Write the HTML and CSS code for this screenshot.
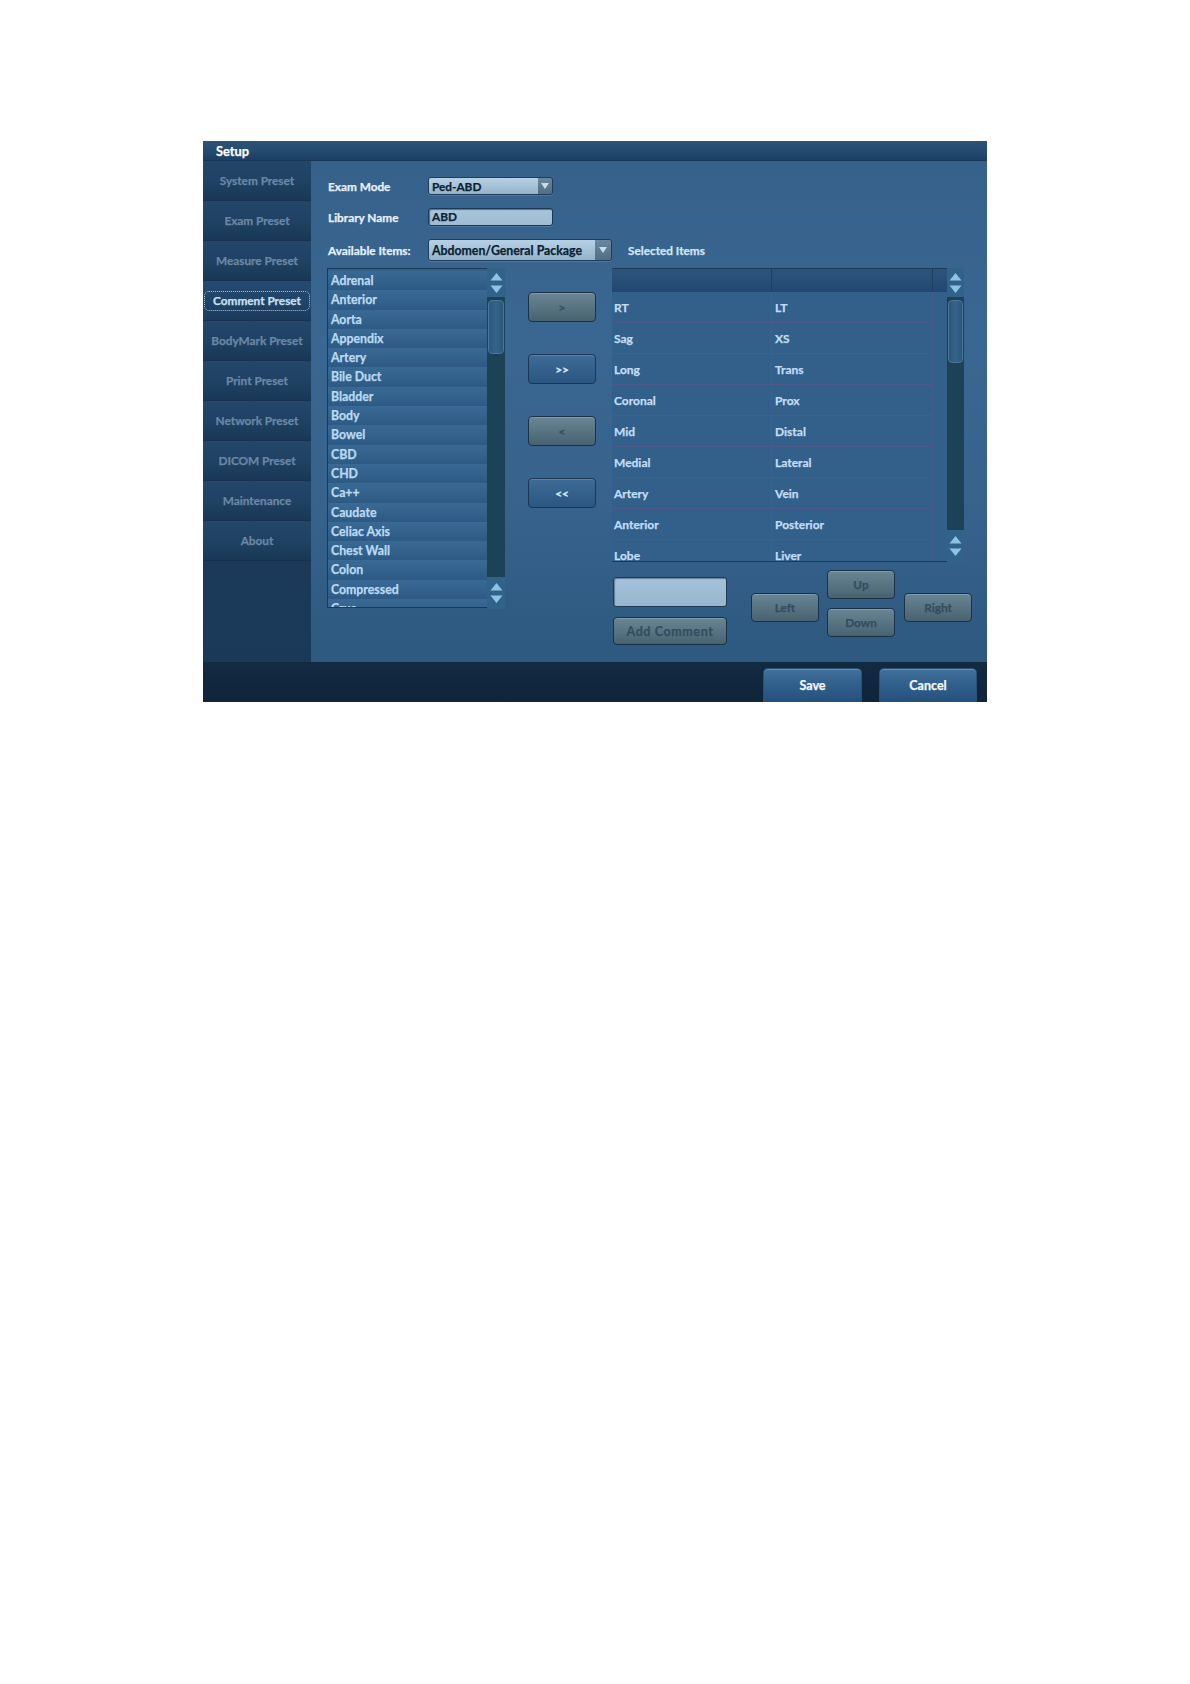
FILE: index.html
```html
<!DOCTYPE html>
<html>
<head>
<meta charset="utf-8">
<title>Setup</title>
<link rel="stylesheet" href="styles.css">
</head>
<body>
<div class="window">
  <div class="titlebar">Setup</div>
  <div class="body">
    <nav class="sidebar">
      <div class="nav-item">System Preset</div>
      <div class="nav-item">Exam Preset</div>
      <div class="nav-item">Measure Preset</div>
      <div class="nav-item active"><span class="focus">Comment Preset</span></div>
      <div class="nav-item">BodyMark Preset</div>
      <div class="nav-item">Print Preset</div>
      <div class="nav-item">Network Preset</div>
      <div class="nav-item">DICOM Preset</div>
      <div class="nav-item">Maintenance</div>
      <div class="nav-item">About</div>
    </nav>
    <main class="content">
      <div class="form-row r1">
        <label class="label">Exam Mode</label>
        <div class="select sel-small"><span class="sel-text">Ped-ABD</span><span class="sel-arrow"><svg width="8" height="6" viewBox="0 0 8 6"><path d="M0 0H8L4 6Z" fill="#c9dcea"/></svg></span></div>
      </div>
      <div class="form-row r2">
        <label class="label">Library Name</label>
        <div class="textbox">ABD</div>
      </div>
      <div class="form-row r3">
        <label class="label">Available Items:</label>
        <div class="select sel-wide"><span class="sel-text">Abdomen/General Package</span><span class="sel-arrow"><svg width="8" height="6" viewBox="0 0 8 6"><path d="M0 0H8L4 6Z" fill="#c9dcea"/></svg></span></div>
        <span class="label sel-label">Selected Items</span>
      </div>

      <div class="lists">
        <div class="left-list">
          <ul class="items">
            <li>Adrenal</li><li>Anterior</li><li>Aorta</li><li>Appendix</li><li>Artery</li><li>Bile Duct</li><li>Bladder</li><li>Body</li><li>Bowel</li><li>CBD</li><li>CHD</li><li>Ca++</li><li>Caudate</li><li>Celiac Axis</li><li>Chest Wall</li><li>Colon</li><li>Compressed</li><li>Crus</li>
          </ul>
          <div class="scrollbar">
            <div class="arrows"><svg width="13" height="22" viewBox="0 0 13 22"><path d="M6.5 1L12.5 8.5H0.5Z" fill="#8fc3e6"/><path d="M0.5 13.5H12.5L6.5 21Z" fill="#8fc3e6"/></svg></div>
            <div class="track"><div class="thumb"></div></div>
            <div class="arrows"><svg width="13" height="22" viewBox="0 0 13 22"><path d="M6.5 1L12.5 8.5H0.5Z" fill="#8fc3e6"/><path d="M0.5 13.5H12.5L6.5 21Z" fill="#8fc3e6"/></svg></div>
          </div>
        </div>

        <div class="move-buttons">
          <button class="btn gray">&gt;</button>
          <button class="btn blue">&gt;&gt;</button>
          <button class="btn gray">&lt;</button>
          <button class="btn blue">&lt;&lt;</button>
        </div>

        <div class="right-side">
          <div class="table-wrap">
            <div class="table">
              <div class="thead"><span class="th c1"></span><span class="th c2"></span><span class="th c3"></span></div>
              <div class="tbody">
                <div class="tr"><span class="td c1">RT</span><span class="td c2">LT</span></div>
                <div class="tr"><span class="td c1">Sag</span><span class="td c2">XS</span></div>
                <div class="tr"><span class="td c1">Long</span><span class="td c2">Trans</span></div>
                <div class="tr"><span class="td c1">Coronal</span><span class="td c2">Prox</span></div>
                <div class="tr"><span class="td c1">Mid</span><span class="td c2">Distal</span></div>
                <div class="tr"><span class="td c1">Medial</span><span class="td c2">Lateral</span></div>
                <div class="tr"><span class="td c1">Artery</span><span class="td c2">Vein</span></div>
                <div class="tr"><span class="td c1">Anterior</span><span class="td c2">Posterior</span></div>
                <div class="tr"><span class="td c1">Lobe</span><span class="td c2">Liver</span></div>
              </div>
            </div>
            <div class="scrollbar sb-right">
              <div class="arrows"><svg width="13" height="22" viewBox="0 0 13 22"><path d="M6.5 1L12.5 8.5H0.5Z" fill="#8fc3e6"/><path d="M0.5 13.5H12.5L6.5 21Z" fill="#8fc3e6"/></svg></div>
              <div class="track"><div class="thumb"></div></div>
              <div class="arrows"><svg width="13" height="22" viewBox="0 0 13 22"><path d="M6.5 1L12.5 8.5H0.5Z" fill="#8fc3e6"/><path d="M0.5 13.5H12.5L6.5 21Z" fill="#8fc3e6"/></svg></div>
            </div>
          </div>

          <div class="controls">
            <div class="comment-col">
              <div class="comment-input"></div>
              <button class="btn gray add">Add Comment</button>
            </div>
            <button class="btn gray dir left">Left</button>
            <div class="updown">
              <button class="btn gray dir">Up</button>
              <button class="btn gray dir">Down</button>
            </div>
            <button class="btn gray dir right">Right</button>
          </div>
        </div>
      </div>
    </main>
  </div>
  <div class="footer">
    <button class="fbtn save">Save</button>
    <button class="fbtn cancel">Cancel</button>
  </div>
</div>
</body>
</html>
```

FILE: styles.css
```css
* { box-sizing: border-box; }
html, body { margin: 0; padding: 0; background: #ffffff; }
body {
  font-family: "Lato", "Open Sans", "DejaVu Sans", sans-serif;
  font-weight: 700;
  height: 1684px;
  -webkit-text-stroke: 0.25px currentColor;
}

.window {
  margin: 141px 0 0 203px;
  width: 784px;
  height: 561px;
  display: flex;
  flex-direction: column;
  background: #2d5680;
}

.titlebar {
  height: 20px;
  padding-left: 13px;
  font-size: 12.8px;
  line-height: 20px;
  color: #ffffff;
  background: linear-gradient(to bottom, #2c5379 0%, #24496e 60%, #1c3f62 100%);
  border-bottom: 1px solid #183656;
}

.body {
  display: flex;
  height: 501px;
}

.sidebar {
  width: 108px;
  flex-shrink: 0;
  display: flex;
  flex-direction: column;
  background: linear-gradient(to bottom, #1d3f60 0%, #1c3c5c 60%, #1a3858 100%);
}

.nav-item {
  height: 40px;
  flex-shrink: 0;
  display: flex;
  align-items: center;
  justify-content: center;
  font-size: 11.8px;
  color: #6b87a5;
  background: linear-gradient(to bottom, #244769 0%, #204365 45%, #193856 100%);
  border-bottom: 1px solid #163250;
}
.nav-item.active {
  color: #c9e0f3;
  background: linear-gradient(to bottom, #254a71 0%, #21456a 45%, #1b3b5c 100%);
}
.focus {
  display: block;
  width: 106px;
  height: 20px;
  line-height: 18px;
  text-align: center;
  border: 1px dotted #a9c6de;
  border-radius: 5px;
}

.content {
  flex: 1;
  padding: 16px 0 0 16px;
  display: flex;
  flex-direction: column;
  background: linear-gradient(to bottom, #35618b 0%, #3a6791 35%, #36628c 70%, #2d587f 100%);
}

.form-row {
  display: flex;
  align-items: center;
}
.r2 { margin-top: 13px; }
.r3 { margin-top: 13px; }

.label {
  width: 101px;
  flex-shrink: 0;
  padding-left: 1px;
  font-size: 11.8px;
  color: #e8f2fb;
}
.sel-label {
  width: auto;
  margin-left: 16px;
  padding-left: 0;
  color: #d4e6f5;
}

.select {
  display: flex;
  height: 18px;
  border: 1px solid #1f3d5a;
  border-radius: 3px;
  overflow: hidden;
  box-shadow: 0 1px 0 rgba(140,180,215,0.25);
}
.sel-small { width: 125px; }
.sel-wide { width: 184px; height: 22px; }
.sel-text {
  flex: 1;
  padding-left: 3px;
  font-size: 11.8px;
  color: #0c1f33;
  display: flex;
  align-items: center;
  background: linear-gradient(to bottom, #b7d0e3 0%, #a4c1d8 55%, #93b1c9 100%);
}
.sel-wide .sel-text { font-size: 12.3px; }
.sel-arrow {
  width: 14px;
  display: flex;
  align-items: center;
  justify-content: center;
  background: linear-gradient(to bottom, #6b879c 0%, #526e84 100%);
}
.sel-wide .sel-arrow { width: 16px; }

.textbox {
  width: 125px;
  height: 18px;
  padding-left: 3px;
  font-size: 11.8px;
  line-height: 16px;
  color: #0c1f33;
  background: linear-gradient(to bottom, #a9c5db 0%, #9ebbd3 100%);
  border: 1px solid #1b3956;
  border-radius: 3px;
  box-shadow: inset 1px 1px 1px rgba(10,30,50,0.5), 0 1px 0 rgba(140,180,215,0.25);
}

.lists {
  margin-top: 7px;
  display: flex;
  align-items: flex-start;
}

.left-list {
  display: flex;
  height: 341px;
  flex-shrink: 0;
}
.items {
  list-style: none;
  margin: 0;
  padding: 2px 0 0 0;
  width: 160px;
  height: 340px;
  overflow: hidden;
  border: 1px solid #1b3a58;
  border-right: none;
  background: #31608b;
}
.items li {
  height: 19.3px;
  line-height: 19.3px;
  padding-left: 3px;
  font-size: 12.3px;
  color: #bcdaf2;
  background: linear-gradient(to bottom, #3a6995 0%, #33628d 50%, #2d5a84 100%);
}

.scrollbar {
  width: 18px;
  flex-shrink: 0;
  display: flex;
  flex-direction: column;
  background: #1c3f55;
}
.arrows {
  height: 29px;
  display: flex;
  align-items: center;
  justify-content: center;
  background: #30628a;
}
.track {
  flex: 1;
  padding: 3px 1px;
  background: #1d4157;
}
.thumb {
  height: 54px;
  border-radius: 4px;
  border: 1px solid #4b7698;
  background: linear-gradient(to right, #2c587c 0%, #35638a 50%, #2c577b 100%);
}
.left-list .scrollbar .arrows:last-child { height: 32px; }

.move-buttons {
  margin-left: 23px;
  padding-top: 24px;
  flex-shrink: 0;
  display: flex;
  flex-direction: column;
  gap: 32px;
}

.btn {
  font-family: "Lato", "Open Sans", "DejaVu Sans", sans-serif;
  font-weight: 700;
  width: 68px;
  height: 30px;
  flex-shrink: 0;
  padding: 0;
  border-radius: 4px;
  font-size: 11.8px;
  -webkit-text-stroke: 0.25px currentColor;
  cursor: pointer;
}
.btn.gray {
  color: #344d60;
  border: 1px solid #1a3248;
  background: linear-gradient(to bottom, #6a8593 0%, #587483 50%, #48636f 100%);
  box-shadow: inset 0 1px 0 rgba(170,200,215,0.35);
}
.btn.blue {
  color: #d8ecfb;
  border: 1px solid #1b3552;
  background: linear-gradient(to bottom, #3e6c97 0%, #34618c 50%, #2b5681 100%);
  box-shadow: inset 0 1px 0 rgba(120,170,210,0.4);
}

.right-side {
  margin-left: 16px;
  width: 352px;
  flex-shrink: 0;
  display: flex;
  flex-direction: column;
}

.table-wrap {
  display: flex;
  height: 294px;
}
.table {
  width: 335px;
  flex-shrink: 0;
  display: flex;
  flex-direction: column;
  overflow: hidden;
  background: #335f8b;
  border-bottom: 1px solid #1b3a58;
}
.thead {
  height: 24px;
  display: flex;
  flex-shrink: 0;
  background: linear-gradient(to bottom, #2b547c 0%, #284f77 50%, #224770 100%);
  border-top: 1px solid #1d3c5c;
}
.th { height: 100%; border-right: 1px solid #1f3f60; }
.th.c1 { width: 160px; }
.th.c2 { width: 161px; }
.th.c3 { width: 14px; border-right: none; }
.tbody { flex: 1; overflow: hidden; }
.tr {
  height: 31px;
  display: flex;
}
.td {
  display: flex;
  align-items: center;
  height: 31px;
  font-size: 12px;
  color: #c2def4;
  border-bottom: 1px solid rgba(115, 78, 140, 0.45);
}
.td.c1 { width: 160px; padding-left: 2px; border-right: 1px solid rgba(115, 78, 140, 0.55); }
.td.c2 { width: 161px; padding-left: 3px; border-right: 1px solid rgba(115, 78, 140, 0.35); }

.sb-right { width: 17px; }
.sb-right .thumb { height: 63px; }
.sb-right .arrows:last-child { height: 32px; }

.controls {
  margin-top: 8px;
  display: flex;
  align-items: flex-start;
}
.comment-col {
  margin-left: 1px;
  margin-top: 7px;
  width: 114px;
  flex-shrink: 0;
  display: flex;
  flex-direction: column;
  gap: 10px;
}
.comment-input {
  height: 30px;
  border-radius: 3px;
  border: 1px solid #1d3b57;
  background: linear-gradient(to bottom, #a5c2d9 0%, #97b6cf 100%);
  box-shadow: inset 1px 1px 1px rgba(10,30,50,0.4);
}
.btn.add {
  width: 114px;
  height: 28px;
  font-size: 12.5px;
  letter-spacing: 0.6px;
}
.btn.dir { height: 29px; }
.btn.left { margin-left: 24px; margin-top: 23px; }
.updown {
  margin-left: 8px;
  flex-shrink: 0;
  display: flex;
  flex-direction: column;
  gap: 9px;
}
.btn.right { margin-left: 9px; margin-top: 23px; }

.footer {
  height: 40px;
  display: flex;
  justify-content: flex-end;
  align-items: flex-end;
  gap: 17px;
  padding-right: 10px;
  background: linear-gradient(to bottom, #132a43 0%, #10243a 100%);
}
.fbtn {
  font-family: "Lato", "Open Sans", "DejaVu Sans", sans-serif;
  font-weight: 700;
  height: 34px;
  width: 99px;
  padding: 0;
  border: 1px solid #2a5077;
  border-bottom: none;
  border-radius: 5px 5px 0 0;
  font-size: 12.5px;
  -webkit-text-stroke: 0.25px currentColor;
  color: #f3f8fc;
  background: linear-gradient(to bottom, #42709c 0%, #32608d 45%, #24507b 100%);
  box-shadow: inset 0 1px 0 rgba(140,185,225,0.45);
}
.fbtn.cancel { width: 98px; }
```
